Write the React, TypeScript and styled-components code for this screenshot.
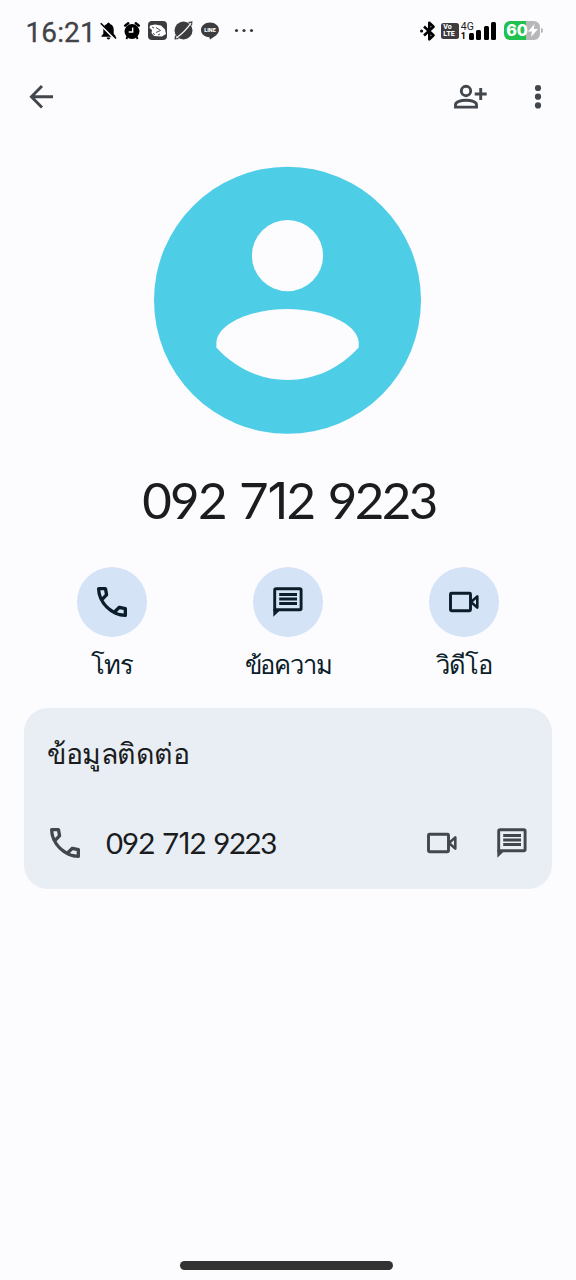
import React from "react";
import styled, { createGlobalStyle } from "styled-components";

const GlobalStyle = createGlobalStyle`
  * { box-sizing: border-box; }
  body { margin: 0; background: #fcfcff; }
`;

const thaiFonts = `Waree, "Liberation Sans", sans-serif`;

const Screen = styled.main`
  display: flex;
  flex-direction: column;
  width: 576px;
  height: 1280px;
  overflow: hidden;
  background: #fcfcff;
  color: #1a1c1e;
  font-family: Roboto, "Noto Sans", sans-serif;
`;

const StatusBar = styled.header`
  display: flex;
  justify-content: space-between;
  align-items: center;
  height: 61px;
  padding: 0 33px 0 25.5px;
`;

const StatusGroup = styled.div`
  display: flex;
  align-items: center;
`;

const NotificationIcons = styled.div`
  display: flex;
  align-items: center;
  gap: 7.5px;
  margin-right: 8px;
`;

const Clock = styled.span`
  width: 74px;
  font-size: 28px;
  line-height: 32px;
  letter-spacing: 0.1px;
  color: #414347;
  padding-top: 5px;
  -webkit-text-stroke: 0.3px #414347;
`;

const Glyph = styled.svg<{ $w: number; $h: number }>`
  display: block;
  flex: none;
  width: ${(p) => p.$w}px;
  height: ${(p) => p.$h}px;
  overflow: visible;
`;

const VolteBadge = styled.span`
  display: flex;
  flex-direction: column;
  justify-content: center;
  width: 18px;
  height: 16px;
  margin-left: 4px;
  padding-left: 2.5px;
  border-radius: 2.5px;
  background: #3d3d3f;
  color: #fff;
  font-size: 7px;
  font-weight: 800;
  line-height: 6.5px;
`;

const NetworkLabel = styled.span`
  display: flex;
  flex-direction: column;
  width: 15px;
  margin: 0 0 0 2px;
  color: #222;
  font-size: 10.5px;
  line-height: 11px;
`;

const SimNumber = styled.span`
  font-size: 9px;
  line-height: 9px;
  font-weight: 700;
  color: #000;
`;

const Signal = styled.span`
  display: flex;
  align-items: flex-end;
  gap: 2.4px;
  height: 18px;
  margin-left: -7px;
`;

const SignalBar = styled.i<{ $h: number }>`
  width: 5px;
  height: ${(p) => p.$h}px;
  border-radius: 1.5px;
  background: #000;
`;

const Battery = styled.span`
  display: flex;
  align-items: center;
  justify-content: center;
  width: 36px;
  height: 19px;
  margin-left: 8px;
  border-radius: 6px;
  background: linear-gradient(90deg, #20c14f 61%, #b7b7b9 61%);
  color: #fff;
  font-family: Inter, sans-serif;
  font-size: 16px;
  font-weight: 800;
  line-height: 19px;
`;

const BatteryTip = styled.i`
  width: 2px;
  height: 5px;
  margin-left: 1px;
  border-radius: 0 2px 2px 0;
  background: #b7b7b9;
`;

const Toolbar = styled.nav`
  display: flex;
  align-items: center;
  justify-content: space-between;
  height: 71px;
  padding: 0 34px 0 29px;
`;

const ToolbarActions = styled.div`
  display: flex;
  align-items: center;
  gap: 47px;
`;

const IconButton = styled.button`
  display: flex;
  padding: 0;
  border: 0;
  background: none;
  color: #42474e;
`;

const Profile = styled.section`
  display: flex;
  flex-direction: column;
  align-items: center;
  padding-top: 34px;
`;

const PhoneNumber = styled.span<{ $size: number }>`
  font-family: Lato, sans-serif;
  font-weight: 400;
  font-size: ${(p) => p.$size}px;
  line-height: 1.2;
  letter-spacing: -0.034em;
  word-spacing: 0.04em;
  white-space: nowrap;
`;

const SlimOne = styled.span`
  font-family: Inter, sans-serif;
  margin-left: 0.01em;
`;

const LastGroup = styled.span`
  letter-spacing: -0.05em;
`;

const ProfileName = styled.h1`
  margin: 35px 0 0;
  height: 62px;
  padding-left: 2px;
  display: flex;
  align-items: center;
`;

const Actions = styled.section`
  display: grid;
  grid-template-columns: repeat(3, 176px);
  justify-content: center;
  margin-top: 36px;
`;

const Action = styled.div`
  display: flex;
  flex-direction: column;
  align-items: center;
  color: #0b1d29;
`;

const ActionCircle = styled.button`
  display: flex;
  align-items: center;
  justify-content: center;
  width: 70px;
  height: 70px;
  padding: 0;
  border: 0;
  border-radius: 50%;
  background: #d4e3f6;
  color: #0b1d29;
`;

const ActionLabel = styled.span`
  margin-top: 8px;
  font-family: ${thaiFonts};
  font-size: 25.5px;
  line-height: 40px;
  letter-spacing: -1.2px;
`;

const Card = styled.section`
  height: 181px;
  margin: 23px 24px 0;
  padding: 24px 25px 0 23px;
  border-radius: 24px;
  background: #e9eef5;
`;

const CardTitle = styled.h2`
  margin: 0;
  height: 44px;
  font-family: ${thaiFonts};
  font-size: 28.5px;
  font-weight: 400;
  line-height: 44px;
  letter-spacing: -0.5px;
`;

const ContactRow = styled.div`
  display: flex;
  align-items: center;
  height: 68px;
  margin-top: 33px;
  padding-left: 3px;
  color: #42474e;
`;

const RowNumber = styled.div`
  flex: 1;
  padding: 1px 0 0 26px;
  color: #1a1c1e;
`;

const RowActions = styled.div`
  display: flex;
  gap: 40px;
`;

const HomeBar = styled.footer`
  width: 213px;
  height: 9px;
  margin: auto auto 10px 180px;
  border-radius: 5px;
  background: #323232;
`;

const CallIcon = () => (
  <Glyph $w={30} $h={30} viewBox="3 3 18 18" fill="currentColor">
    <path d="M19.95 21q-3.125 0-6.175-1.363t-5.55-3.862q-2.5-2.5-3.862-5.55T3 4.05q0-.45.3-.75t.75-.3H8.1q.35 0 .625.238t.325.562l.65 3.5q.05.4-.025.675T9.4 8.45L6.975 10.9q.5.925 1.187 1.787t1.513 1.663q.775.775 1.625 1.438T13.1 17l2.35-2.35q.225-.225.588-.337t.712-.063l3.45.7q.35.1.575.363T21 15.9v4.05q0 .45-.3.75t-.75.3M6.025 9l1.65-1.65L7.25 5H5.025q.125 1.025.35 2.025T6.025 9m8.95 8.95q.975.425 1.988.675T19 18.95v-2.2l-2.35-.475z" />
  </Glyph>
);

const ChatIcon = () => (
  <Glyph $w={30} $h={30} viewBox="0 0 30 30" fill="none" stroke="currentColor" strokeWidth="2.9">
    <path d="M3.2 1.7H26.8Q28.1 1.700 28.1 3V21.500Q28.1 22.800 26.800 22.800H1.700V3Q1.700 1.700 3.200 1.700Z" />
    <path d="M.3 22V29.700L6.800 23.500Z" fill="currentColor" stroke="none" />
    <path d="M6.200 7.500H24M6.200 12H24M6.200 16.500H24" strokeWidth="2.800" />
  </Glyph>
);

const VideoIcon = () => (
  <Glyph $w={30} $h={30} viewBox="0 0 30 30" fill="none" stroke="currentColor" strokeWidth="2.900">
    <rect x="1.500" y="6.300" width="20" height="17.500" rx="1" />
    <path d="M22 15L28.300 9.400V20.600Z" strokeWidth="2.600" strokeLinejoin="round" />
  </Glyph>
);

const StatusIcons = () => (
  <NotificationIcons>
    <Glyph $w={17} $h={19} viewBox="0 0 18 19">
      <path d="M9 1Q10.5 1 10.5 2.6Q14.5 4 14.5 8.5V13L16.5 15.3V16H1.5V15.3L3.5 13V8.5Q3.5 4 7.5 2.6Q7.5 1 9 1ZM7 17H11Q10.5 19 9 19T7 17Z" />
      <path d="M.3 2.700L16 18.400" stroke="#fcfcff" strokeWidth="2.800" />
      <path d="M.8 1.800L17 18" stroke="#000" strokeWidth="1.700" />
    </Glyph>
    <Glyph $w={16} $h={18} viewBox="0 0 17 19">
      <path d="M4 15L2.500 18M13 15L14.500 18" stroke="#000" strokeWidth="2" />
      <circle cx="8.500" cy="10" r="7.900" />
      <path d="M1.200 3.800L4.500 1.300M15.800 3.800L12.500 1.300" stroke="#000" strokeWidth="2.600" strokeLinecap="round" />
      <path d="M9.200 5.700V10.500H5" stroke="#fff" strokeWidth="1.500" fill="none" />
    </Glyph>
    <Glyph $w={19} $h={19} viewBox="0 0 19 19">
      <rect width="19" height="19" rx="4" fill="#3c3c3f" />
      <path d="M2 4.500L7 3.500L13 4.500L17 8.500L18 13L14 15.500L6 15L3.500 12L4 9L1.500 7Z" fill="#fff" />
      <path d="M8 6.500L12.500 9.500L8 11.500M4 6L6 7M5 12.500L7 13.500M10 14L12 13" fill="none" stroke="#3c3c3f" strokeWidth=".9" />
    </Glyph>
    <Glyph $w={19} $h={19} viewBox="0 0 19 19">
      <circle cx="9.500" cy="9.500" r="9" fill="#3c3c3f" />
      <path d="M14 1L18.500 .3L18 5ZM1 14L.5 18.500L5 18Z" fill="#3c3c3f" />
      <path d="M2.200 17Q10.500 11.500 17 2.200" fill="none" stroke="#fcfcff" strokeWidth="1.200" />
    </Glyph>
    <Glyph $w={18} $h={18} viewBox="0 0 18 18">
      <path d="M9 .5C14 .5 18 3.700 18 8C18 12.500 12 15.500 9 17.500C8.500 17.500 9 15.700 8.200 15.300C3.500 14.800 0 12 0 8C0 3.700 4 .5 9 .5Z" fill="#3c3c3f" />
      <text x="9" y="10" textAnchor="middle" fill="#fff" fontFamily="Roboto" fontWeight="900" fontSize="5.500">LINE</text>
    </Glyph>
  </NotificationIcons>
);

const FormattedNumber = ({ size }: { size: number }) => (
  <PhoneNumber $size={size}>
    092 7<SlimOne>1</SlimOne>2 <LastGroup>9223</LastGroup>
  </PhoneNumber>
);

const ACTIONS = [
  { label: "โทร", icon: <CallIcon /> },
  { label: "ข้อความ", icon: <ChatIcon /> },
  { label: "วิดีโอ", icon: <VideoIcon /> },
];

export default function App() {
  return (
    <>
      <GlobalStyle />
      <Screen>
        <StatusBar>
          <StatusGroup>
            <Clock>16:21</Clock>
            <StatusIcons />
            <Glyph $w={28} $h={4} viewBox="0 0 28 4" fill="#3c3c3f">
              <circle cx="9.500" cy="1.500" r="1.600" />
              <circle cx="17" cy="1.500" r="1.600" />
              <circle cx="24.500" cy="1.500" r="1.600" />
            </Glyph>
          </StatusGroup>
          <StatusGroup>
            <Glyph $w={16} $h={20} viewBox="0 0 16 20" fill="none" stroke="#000" strokeWidth="2.600" strokeLinejoin="round">
              <path d="M3 5.500L12.500 14.200L8.300 18.300V1.700L12.500 5.800L3 14.500" />
              <circle cx=".6" cy="10" r=".7" strokeWidth="1.800" />
            </Glyph>
            <VolteBadge><span>Vo</span><span>LTE</span></VolteBadge>
            <NetworkLabel>4G<SimNumber>1</SimNumber></NetworkLabel>
            <Signal>
              {[7, 10, 14, 18].map((h) => <SignalBar key={h} $h={h} />)}
            </Signal>
            <Battery>
              60
              <Glyph $w={10} $h={13} viewBox="0 0 10 13" fill="#fff">
                <path d="M6.500 0L0 7.500H4L3 13L10 5H5.800Z" />
              </Glyph>
            </Battery>
            <BatteryTip />
          </StatusGroup>
        </StatusBar>

        <Toolbar>
          <IconButton aria-label="Back">
            <Glyph $w={24} $h={24} viewBox="0 0 24 24" fill="none" stroke="currentColor" strokeWidth="2.900">
              <path d="M24 11.700H2.800M13 .9L2.400 11.700L13 22.500" />
            </Glyph>
          </IconButton>
          <ToolbarActions>
            <IconButton aria-label="Add contact">
              <Glyph $w={33} $h={24} viewBox="0 0 33 24" fill="none" stroke="currentColor" strokeWidth="2.900">
                <circle cx="12" cy="6" r="4.700" />
                <path d="M1.500 22.100V19.800C1.500 13.800 22.500 13.800 22.500 19.800V22.100Z" />
                <path d="M26.700 3V15M20.700 9H32.700" />
              </Glyph>
            </IconButton>
            <IconButton aria-label="More options">
              <Glyph $w={8} $h={24} viewBox="0 0 8 24" fill="currentColor">
                <circle cx="4" cy="3" r="3.100" />
                <circle cx="4" cy="11.700" r="3.100" />
                <circle cx="4" cy="20.400" r="3.100" />
              </Glyph>
            </IconButton>
          </ToolbarActions>
        </Toolbar>

        <Profile>
          <Glyph $w={268} $h={268} viewBox="0 0 268 268">
            <circle cx="133.500" cy="134.300" r="133.500" fill="#4ecde6" />
            <circle cx="133.500" cy="89.700" r="35.600" fill="#fcfcff" />
            <path d="M62.400 181.500V176C64 157 98 143 133.500 143S203 157 204.700 176V181.500C186 202 161 214 133.500 214S81 202 62.400 181.500Z" fill="#fcfcff" />
          </Glyph>
          <ProfileName>
            <FormattedNumber size={51} />
          </ProfileName>
        </Profile>

        <Actions>
          {ACTIONS.map(({ label, icon }) => (
            <Action key={label}>
              <ActionCircle aria-label={label}>{icon}</ActionCircle>
              <ActionLabel>{label}</ActionLabel>
            </Action>
          ))}
        </Actions>

        <Card>
          <CardTitle>ข้อมูลติดต่อ</CardTitle>
          <ContactRow>
            <CallIcon />
            <RowNumber>
              <FormattedNumber size={29.5} />
            </RowNumber>
            <RowActions>
              <VideoIcon />
              <ChatIcon />
            </RowActions>
          </ContactRow>
        </Card>
        <HomeBar />
      </Screen>
    </>
  );
}
